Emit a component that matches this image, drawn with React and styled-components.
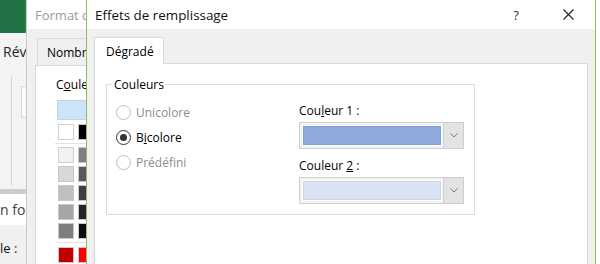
import React from 'react';
import styled, { createGlobalStyle } from 'styled-components';

const UI = `"Open Sans", "Noto Sans", "DejaVu Sans", sans-serif`;

const Global = createGlobalStyle`
  html, body { margin: 0; padding: 0; background: #fff; }
  body { font-family: ${UI}; }
`;

const Page = styled.div`
  display: flex;
  width: 600px;
  height: 264px;
  overflow: hidden;
  font-family: ${UI};
  font-size: 12px;
  color: #000;
`;

/* ---------- Excel window behind ---------- */
const ExcelStrip = styled.div`
  width: 26px;
  flex: none;
  display: flex;
  flex-direction: column;
  border-right: 1px solid #c8c8c8;
  background: #f3f3f3;
  overflow: hidden;
`;
const RibbonTop = styled.div`
  height: 33px;
  flex: none;
  background: #217346;
  border-right: 1px dotted #3f8f5f;
`;
const RibbonTab = styled.div`
  height: 37px;
  flex: none;
  display: flex;
  align-items: center;
  padding-left: 3px;
  font-size: 14px;
  color: #262626;
  white-space: nowrap;
`;
const RibbonBody = styled.div`
  flex: 1;
  display: flex;
  padding: 6px 0 4px 11px;
  gap: 9px;
`;
const RibbonDivider = styled.div`
  width: 1px;
  background: #d4d4d4;
`;
const RibbonBox = styled.div`
  width: 5px;
  height: 30px;
  margin-top: 10px;
  border: 1px solid #d8d8d8;
  border-right: none;
  background: #fafafa;
`;
const ScrollBar = styled.div`
  height: 5px;
  flex: none;
  background: #cdcdcd;
`;
const FormulaRow = styled.div`
  height: 31px;
  flex: none;
  display: flex;
  align-items: center;
  background: #fff;
  font-size: 14px;
  color: #444;
  white-space: nowrap;
`;
const LabelRow = styled.div`
  height: 39px;
  flex: none;
  box-sizing: border-box;
  display: flex;
  align-items: center;
  padding-top: 7px;
  background: #f0f0f0;
  font-size: 13px;
  color: #111;
  white-space: nowrap;
`;

/* ---------- Format de cellule dialog (behind) ---------- */
const FormatDialog = styled.div`
  width: 59px;
  flex: none;
  display: flex;
  flex-direction: column;
  background: #f0f0f0;
  overflow: hidden;
`;
const FormatTitle = styled.div`
  height: 29px;
  flex: none;
  display: flex;
  align-items: center;
  padding-left: 8px;
  background: #fff;
  color: #9a9a9a;
  font-size: 13px;
  white-space: nowrap;
  overflow: hidden;
`;
const FormatBody = styled.div`
  flex: 1;
  display: flex;
  flex-direction: column;
  padding: 9px 0 0 8px;
`;
const GrayTab = styled.div`
  height: 26px;
  flex: none;
  margin-left: 2px;
  padding-left: 9px;
  display: flex;
  align-items: center;
  border: 1px solid #dadada;
  border-bottom: none;
  border-right: none;
  background: #f0f0f0;
  white-space: nowrap;
  overflow: hidden;
`;
const FormatPanel = styled.div`
  flex: 1;
  background: #fff;
  border-top: 1px solid #dadada;
  border-left: 1px solid #dadada;
  padding: 11px 0 0 20px;
  white-space: nowrap;
  overflow: hidden;
`;
const LabelText = styled.div`
  line-height: 16px;
  white-space: nowrap;
`;
const BigSwatch = styled.div`
  margin: 7px 0 0 1px;
  height: 18px;
  background: #cce4f7;
  border: 1px solid #b7d5f0;
  border-right: none;
`;
const SwatchRow = styled.div`
  display: flex;
  gap: 4px;
  margin-left: 2px;
  margin-top: ${p => p.$top}px;
`;
const Swatch = styled.div`
  width: 16px;
  height: 16px;
  flex: none;
  box-sizing: border-box;
  border: 1px solid ${p => (p.$light ? '#d0d0d0' : '#c8c8c8')};
  background: ${p => p.$c};
`;
const SwatchSep = styled.div`
  height: 1px;
  margin: 3px 0 0 -1px;
  background: #e2e2e2;
`;

/* ---------- Effets de remplissage dialog (front) ---------- */
const EffetsDialog = styled.div`
  width: 508px;
  flex: none;
  display: flex;
  flex-direction: column;
  border-left: 1px solid #8cc152;
  border-right: 1px solid #8cc152;
  background: #f0f0f0;
`;
const TitleBar = styled.div`
  height: 29px;
  flex: none;
  display: flex;
  align-items: center;
  padding-left: 8px;
  background: #fff;
`;
const TitleText = styled.div`
  flex: 1;
  font-size: 13.4px;
  color: #111;
  white-space: nowrap;
`;
const TitleButton = styled.div`
  width: 30px;
  height: 29px;
  display: flex;
  align-items: center;
  justify-content: center;
  margin-right: ${p => p.$mr}px;
  color: #333;
  font-size: 13px;
`;
const DialogBody = styled.div`
  flex: 1;
  display: flex;
  flex-direction: column;
  padding: 8px 7px 0 7px;
`;
const TabStrip = styled.div`
  display: flex;
  flex: none;
`;
const ActiveTab = styled.div`
  position: relative;
  z-index: 1;
  width: 70px;
  height: 27px;
  margin-bottom: -1px;
  box-sizing: border-box;
  padding-left: 11px;
  display: flex;
  align-items: center;
  background: #fff;
  border: 1px solid #d9d9d9;
  border-bottom: none;
`;
const TabPanel = styled.div`
  flex: 1;
  background: #fff;
  border: 1px solid #d9d9d9;
  border-bottom: none;
  padding: 20px 0 0 11px;
`;
const GroupBox = styled.div`
  position: relative;
  width: 369px;
  height: 131px;
  box-sizing: border-box;
  border: 1px solid #dcdcdc;
  display: grid;
  grid-template-columns: 192px 165px;
  align-items: start;
`;
const Legend = styled.div`
  position: absolute;
  top: -8px;
  left: 5px;
  padding: 0 2px;
  background: #fff;
  line-height: 16px;
`;
const RadioColumn = styled.div`
  display: flex;
  flex-direction: column;
  padding: 15px 0 0 9px;
`;
const RadioRow = styled.div`
  height: 25px;
  display: flex;
  align-items: center;
  gap: 5px;
  color: ${p => (p.$disabled ? '#8c8c8c' : '#000')};
`;
const RadioCircle = styled.span`
  width: 15px;
  height: 15px;
  box-sizing: border-box;
  border-radius: 50%;
  border: ${p => (p.$checked ? '1.5px solid #333' : '1px solid #bdbdbd')};
  background: #fff;
  display: flex;
  align-items: center;
  justify-content: center;
  &::after {
    content: '';
    width: 7px;
    height: 7px;
    border-radius: 50%;
    background: ${p => (p.$checked ? '#333' : 'transparent')};
  }
`;
const ColorColumn = styled.div`
  display: flex;
  flex-direction: column;
  padding-top: 18px;
`;
const ColorLabel = styled.div`
  line-height: 16px;
  margin-top: ${p => p.$top}px;
  margin-bottom: 3px;
`;
const Dropdown = styled.div`
  height: 27px;
  box-sizing: border-box;
  display: flex;
  border: 1px solid #cfcfcf;
  background: #f3f3f3;
`;
const Field = styled.div`
  flex: 1;
  padding: 3px 2px 3px 3px;
  display: flex;
`;
const ColorBox = styled.div`
  flex: 1;
  box-sizing: border-box;
  border: 1px solid ${p => p.$border};
  background: ${p => p.$c};
  box-shadow: 0 0 0 1px #fff;
`;
const DropButton = styled.div`
  width: 19px;
  flex: none;
  display: flex;
  align-items: center;
  justify-content: center;
  background: #e3e3e3;
  border-left: 1px solid #d2d2d2;
`;

const Chevron = () => (
  <svg width="8" height="5" viewBox="0 0 8 5">
    <path d="M0.5 0.5 L4 4 L7.5 0.5" fill="none" stroke="#7a7a7a" strokeWidth="1" />
  </svg>
);

const CloseIcon = () => (
  <svg width="11" height="11" viewBox="0 0 11 11">
    <path d="M0.5 0.5 L10.5 10.5 M10.5 0.5 L0.5 10.5" stroke="#222" strokeWidth="1.1" />
  </svg>
);

const grayRows = [
  ['#f2f2f2', '#7f7f7f'],
  ['#d8d8d8', '#595959'],
  ['#bfbfbf', '#3f3f3f'],
  ['#a5a5a5', '#262626'],
  ['#7f7f7f', '#0c0c0c'],
];

export default function App() {
  return (
    <>
      <Global />
      <Page>
        <ExcelStrip>
          <RibbonTop />
          <RibbonTab>Rév</RibbonTab>
          <RibbonBody>
            <RibbonDivider />
            <RibbonBox />
          </RibbonBody>
          <ScrollBar />
          <FormulaRow>n forme</FormulaRow>
          <LabelRow>le :</LabelRow>
        </ExcelStrip>

        <FormatDialog>
          <FormatTitle>Format de cellule</FormatTitle>
          <FormatBody>
            <GrayTab>Nombre</GrayTab>
            <FormatPanel>
              <LabelText>
                C<u>o</u>uleur
              </LabelText>
              <BigSwatch />
              <SwatchRow $top={4}>
                <Swatch $c="#ffffff" $light />
                <Swatch $c="#000000" />
              </SwatchRow>
              <SwatchSep />
              <SwatchRow $top={3}>
                <Swatch $c={grayRows[0][0]} $light />
                <Swatch $c={grayRows[0][1]} />
              </SwatchRow>
              {grayRows.slice(1).map((r, i) => (
                <SwatchRow key={i} $top={3}>
                  <Swatch $c={r[0]} />
                  <Swatch $c={r[1]} />
                </SwatchRow>
              ))}
              <SwatchSep />
              <SwatchRow $top={4}>
                <Swatch $c="#c00000" />
                <Swatch $c="#ff0000" />
              </SwatchRow>
            </FormatPanel>
          </FormatBody>
        </FormatDialog>

        <EffetsDialog>
          <TitleBar>
            <TitleText>Effets de remplissage</TitleText>
            <TitleButton $mr={22}>?</TitleButton>
            <TitleButton $mr={12}>
              <CloseIcon />
            </TitleButton>
          </TitleBar>
          <DialogBody>
            <TabStrip>
              <ActiveTab>Dégradé</ActiveTab>
            </TabStrip>
            <TabPanel>
              <GroupBox>
                <Legend>Couleurs</Legend>
                <RadioColumn>
                  <RadioRow $disabled>
                    <RadioCircle />
                    Unicolore
                  </RadioRow>
                  <RadioRow>
                    <RadioCircle $checked />
                    <span>
                      B<u>i</u>colore
                    </span>
                  </RadioRow>
                  <RadioRow $disabled>
                    <RadioCircle />
                    Prédéfini
                  </RadioRow>
                </RadioColumn>
                <ColorColumn>
                  <ColorLabel $top={0}>
                    Cou<u>l</u>eur 1 :
                  </ColorLabel>
                  <Dropdown>
                    <Field>
                      <ColorBox $c="#8eaadb" $border="#7f9fd6" />
                    </Field>
                    <DropButton>
                      <Chevron />
                    </DropButton>
                  </Dropdown>
                  <ColorLabel $top={9}>
                    Couleur <u>2</u> :
                  </ColorLabel>
                  <Dropdown>
                    <Field>
                      <ColorBox $c="#dae3f3" $border="#c9d5ec" />
                    </Field>
                    <DropButton>
                      <Chevron />
                    </DropButton>
                  </Dropdown>
                </ColorColumn>
              </GroupBox>
            </TabPanel>
          </DialogBody>
        </EffetsDialog>
      </Page>
    </>
  );
}
